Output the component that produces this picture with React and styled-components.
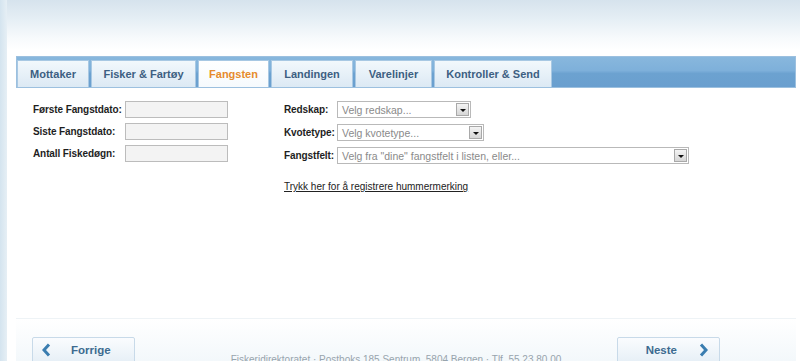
import React from "react";
import styled, { createGlobalStyle } from "styled-components";

const GlobalStyle = createGlobalStyle`
  html, body {
    margin: 0;
    padding: 0;
    background: #ffffff;
    font-family: "Liberation Sans", Arial, sans-serif;
  }
`;

const Shell = styled.div`
  display: grid;
  grid-template-columns: 7px 1fr;
  width: 800px;
  height: 361px;
  overflow: hidden;
`;

const SideStrip = styled.div`
  background: linear-gradient(to right, #d4e4ef, #e6eff5);
`;

const Main = styled.div`
  display: flex;
  flex-direction: column;
  padding: 56px 4px 0 9px;
  background: linear-gradient(
    to bottom,
    #d6e3ed 0px,
    #e6eff5 20px,
    #f7fafc 38px,
    #ffffff 50px
  );
`;

const TabBar = styled.div`
  display: flex;
  gap: 2px;
  padding-top: 3px;
  box-sizing: border-box;
  height: 32px;
  border: 1px solid #9cc0df;
  background: linear-gradient(
    to bottom,
    #88b7dd 0%,
    #7eb0da 45%,
    #6ca2d0 55%,
    #6a9fcf 100%
  );
`;

const Tab = styled.div`
  width: ${(p) => p.$w}px;
  height: 27px;
  box-sizing: border-box;
  display: flex;
  align-items: center;
  justify-content: center;
  border: 1px solid #a8c8e3;
  border-bottom: none;
  background: ${(p) =>
    p.$active
      ? "linear-gradient(to bottom, #ffffff, #f6fafd)"
      : "linear-gradient(to bottom, #f2f8fc, #dce9f4)"};
  color: ${(p) => (p.$active ? "#e68b2c" : "#3d5f82")};
  font-size: 11px;
  font-weight: bold;
  white-space: nowrap;
`;

const Content = styled.div`
  flex: 1;
  display: flex;
  padding: 13px 0 0 17px;
`;

const LeftCol = styled.div`
  width: 251px;
  display: grid;
  grid-template-columns: 92px 103px;
  grid-auto-rows: 17px;
  row-gap: 5px;
  align-content: start;
  align-items: center;
`;

const RightCol = styled.div`
  display: flex;
  flex-direction: column;
`;

const SelectGrid = styled.div`
  display: grid;
  grid-template-columns: 53px auto;
  grid-auto-rows: 17px;
  row-gap: 6px;
  align-items: center;
  justify-items: start;
`;

const Label = styled.label`
  font-size: 10px;
  font-weight: bold;
  color: #1e1e1e;
  white-space: nowrap;
  letter-spacing: -0.1px;
`;

const TextInput = styled.div`
  width: 103px;
  height: 17px;
  box-sizing: border-box;
  border: 1px solid #bcbcbc;
  background: #f3f3f3;
`;

const Select = styled.div`
  width: ${(p) => p.$w}px;
  height: 17px;
  box-sizing: border-box;
  display: flex;
  align-items: center;
  justify-content: space-between;
  border: 1px solid #b9b9b9;
  background: #ffffff;
  padding: 1px 1px 1px 4px;
  font-size: 10.5px;
  color: #8a8a8a;
  white-space: nowrap;
`;

const DropButton = styled.span`
  width: 13px;
  height: 13px;
  box-sizing: border-box;
  display: flex;
  align-items: center;
  justify-content: center;
  border: 1px solid #a9a9a9;
  background: linear-gradient(to bottom, #f4f4f4, #d6d6d6);

  &::after {
    content: "";
    border-left: 3px solid transparent;
    border-right: 3px solid transparent;
    border-top: 3px solid #111;
    margin-top: 1px;
  }
`;

const Link = styled.a`
  margin-top: 17px;
  font-size: 10px;
  color: #222;
  text-decoration: underline;
  cursor: pointer;
`;

const Footer = styled.div`
  height: 43px;
  box-sizing: border-box;
  display: grid;
  grid-template-columns: 103px 1fr 103px;
  align-items: start;
  padding: 18px 76px 0 16px;
  border-top: 1px solid #eef3f6;
  background: linear-gradient(to bottom, #ffffff, #f3f8fb);
`;

const NavButton = styled.div`
  height: 34px;
  box-sizing: border-box;
  display: flex;
  align-items: flex-start;
  justify-content: ${(p) => (p.$next ? "flex-end" : "flex-start")};
  gap: ${(p) => (p.$next ? "22px" : "20px")};
  padding-top: 5px;
  padding-left: ${(p) => (p.$next ? "0" : "9px")};
  padding-right: ${(p) => (p.$next ? "11px" : "0")};
  border: 1px solid #c8dae9;
  border-radius: 2px;
  background: linear-gradient(to bottom, #fafcfe, #e0ebf4);
  color: #3d6b90;
  font-size: 11.5px;
  font-weight: bold;
  line-height: 14px;
  cursor: pointer;
`;

const FooterText = styled.div`
  margin-top: 17px;
  text-align: center;
  padding-left: 40px;
  font-size: 10px;
  line-height: 12px;
  color: #98a4ad;
  white-space: nowrap;
`;

const Chevron = ({ dir }) => (
  <svg width="9" height="14" viewBox="0 0 9 14">
    <polyline
      points={dir === "left" ? "7,1.5 2,7 7,12.5" : "2,1.5 7,7 2,12.5"}
      fill="none"
      stroke="#3a7db0"
      strokeWidth="3"
      strokeLinejoin="miter"
    />
  </svg>
);

const tabs = [
  { label: "Mottaker", w: 72 },
  { label: "Fisker & Fartøy", w: 105 },
  { label: "Fangsten", w: 71, active: true },
  { label: "Landingen", w: 82 },
  { label: "Varelinjer", w: 77 },
  { label: "Kontroller & Send", w: 118 },
];

export default function App() {
  return (
    <>
      <GlobalStyle />
      <Shell>
        <SideStrip />
        <Main>
          <TabBar>
            {tabs.map((t) => (
              <Tab key={t.label} $w={t.w} $active={t.active}>
                {t.label}
              </Tab>
            ))}
          </TabBar>

          <Content>
            <LeftCol>
              <Label>Første Fangstdato:</Label>
              <TextInput />
              <Label>Siste Fangstdato:</Label>
              <TextInput />
              <Label>Antall Fiskedøgn:</Label>
              <TextInput />
            </LeftCol>

            <RightCol>
              <SelectGrid>
                <Label>Redskap:</Label>
                <Select $w={134}>
                  Velg redskap...
                  <DropButton />
                </Select>
                <Label>Kvotetype:</Label>
                <Select $w={147}>
                  Velg kvotetype...
                  <DropButton />
                </Select>
                <Label>Fangstfelt:</Label>
                <Select $w={352}>
                  Velg fra "dine" fangstfelt i listen, eller...
                  <DropButton />
                </Select>
              </SelectGrid>
              <Link>Trykk her for å registrere hummermerking</Link>
            </RightCol>
          </Content>

          <Footer>
            <NavButton>
              <Chevron dir="left" />
              Forrige
            </NavButton>
            <FooterText>
              Fiskeridirektoratet · Postboks 185 Sentrum, 5804 Bergen · Tlf. 55 23 80 00
            </FooterText>
            <NavButton $next>
              Neste
              <Chevron dir="right" />
            </NavButton>
          </Footer>
        </Main>
      </Shell>
    </>
  );
}
